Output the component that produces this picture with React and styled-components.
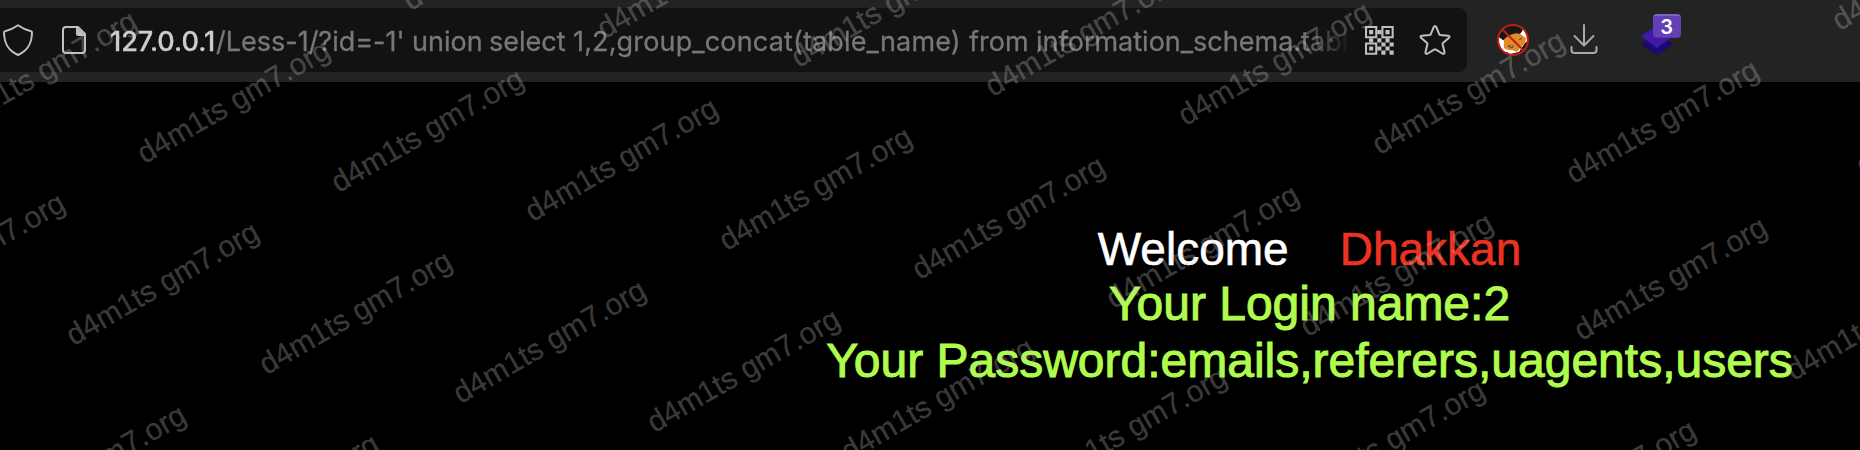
import React from "react";
import styled, { createGlobalStyle } from "styled-components";

const GlobalStyle = createGlobalStyle`
  html, body { margin: 0; background: #000; }
  body { overflow: hidden; }
  * { box-sizing: border-box; }
`;

const Window = styled.div`
  position: relative;
  width: 1860px;
  height: 450px;
  overflow: hidden;
  background: #000;
`;

const Toolbar = styled.header`
  display: flex;
  align-items: center;
  height: 82px;
  padding: 8px 0 10px;
  background: #232323;
`;

const AddressBar = styled.div`
  display: flex;
  align-items: center;
  width: 1467px;
  height: 64px;
  padding-left: 2px;
  border-radius: 0 8px 8px 0;
  background: #121212;
`;

const Icon = styled.svg`
  display: block;
  flex: none;
  width: ${(p) => p.$size || 32}px;
  height: ${(p) => p.$size || 32}px;
  margin-left: ${(p) => p.$gap || 0}px;
  overflow: visible;
`;

const Url = styled.div`
  display: flex;
  flex: none;
  width: 1241px;
  margin-left: 20px;
  padding-top: 3px;
  white-space: pre;
  font: 400 27px/40px Inter, sans-serif;
  color: #787878;
  -webkit-mask-image: linear-gradient(to right, #000 1192px, transparent 1241px);
  mask-image: linear-gradient(to right, #000 1192px, transparent 1241px);
`;

const UrlPart = styled.span`
  flex: none;
  width: ${(p) => p.$width}px;
  color: ${(p) => (p.$host ? "#cdcdcd" : "inherit")};
  font-weight: ${(p) => (p.$host ? 500 : 400)};
  letter-spacing: ${(p) => p.$spacing || 0}px;
  -webkit-text-stroke: 0.3px currentColor;
`;

const Extension = styled.div`
  position: relative;
  margin-left: 40.5px;
`;

const Badge = styled.span`
  position: absolute;
  top: -10px;
  left: 12px;
  width: 28px;
  height: 24px;
  border-radius: 4px;
  border-top: 2px solid #8263c4;
  border-bottom: 1px solid #5636a0;
  background: #643fb6;
  color: #fff;
  font: 600 20px/22px Inter, sans-serif;
  text-align: center;
`;

const Page = styled.main`
  display: flex;
  flex-direction: column;
  align-items: center;
  padding: 140px 0 0 759px;
  font-family: "Liberation Sans", Arial, sans-serif;
  white-space: pre;
`;

const Greeting = styled.div`
  display: flex;
  gap: 51px;
  margin-bottom: -1px;
  font-size: 46px;
  line-height: 54px;
  color: #fff;
  -webkit-text-stroke: 0.6px currentColor;
`;

const Name = styled.span`
  color: #ec3223;
`;

const Result = styled.div`
  font-size: 48px;
  line-height: 57px;
  color: #b0fc4e;
  -webkit-text-stroke: 1px currentColor;
`;

const Watermarks = styled.div`
  position: absolute;
  inset: 0;
  pointer-events: none;
`;

const Mark = styled.span`
  position: absolute;
  left: ${(p) => p.$x}px;
  top: ${(p) => p.$y}px;
  font: 30px/30px "Liberation Sans", Arial, sans-serif;
  white-space: pre;
  color: rgba(200, 200, 200, 0.28);
  -webkit-text-stroke: 0.3px rgba(200, 200, 200, 0.28);
  transform-origin: 0 27px;
  transform: translate(6.5px, -23px) rotate(-30deg);
`;

const MARKS = [
  [405, 9], [599, 37], [793, 66], [987, 95], [1180, 124], [1374, 153], [1568, 182], [1834, 29],
  [-54, 133], [139, 162], [333, 191], [527, 220], [721, 249], [914, 278], [1108, 307], [1302, 335],
  [-126, 315], [68, 344], [261, 373], [455, 402], [649, 431], [843, 460], [1036, 489],
  [-5, 527], [188, 556], [1294, 502], [1505, 542], [1576, 339], [1788, 379], [1858, 174],
];

const ShieldIcon = () => (
  <Icon viewBox="0 0 32 32" fill="none" stroke="#c0c0c0" strokeWidth="2" strokeLinejoin="round">
    <path d="M16 1.2 Q22.5 5.8 29 7.3 Q30.2 7.7 30 9 C29.6 19 26.5 26.5 16 31 C5.500 26.500 2.400 19 2 9 Q1.800 7.700 3 7.300 Q9.500 5.800 16 1.200Z" />
  </Icon>
);

const PageIcon = () => (
  <Icon $gap={24} viewBox="0 0 32 32">
    <path d="M8 3H20L27 10V26a3 3 0 0 1-3 3H8a3 3 0 0 1-3-3V6a3 3 0 0 1 3-3Z" fill="none" stroke="#c0c0c0" strokeWidth="2" />
    <path d="M18 2.500L28 12H20a2 2 0 0 1-2-2Z" fill="#c0c0c0" />
  </Icon>
);

const QrIcon = () => (
  <Icon $size={28.7} $gap={14} viewBox="0 0 14 14" fill="#c0c0c0">
    <path fillRule="evenodd" d="M0 0H6V6H0ZM1 1V5H5V1ZM8 0H14V6H8ZM9 1V5H13V1ZM0 8H6V14H0ZM1 9V13H5V9Z" />
    <path d="M2 2H4V4H2ZM10 2H12V4H10ZM2 10H4V12H2ZM6 2H8V4H6ZM2 6H4V8H2ZM6 6H8V8H6ZM10 6H12V8H10ZM8 8H10V10H8ZM12 8H14V10H12ZM6 10H8V12H6ZM10 10H12V12H10ZM8 12H10V14H8ZM12 12H14V14H12Z" />
  </Icon>
);

const StarIcon = () => (
  <Icon $gap={25.3} viewBox="0 0 32 32" fill="none" stroke="#c0c0c0" strokeWidth="2" strokeLinejoin="round">
    <path d="M14.700 3.100 Q16 .800 17.300 3.100 L20.300 10.300 Q20.600 11 21.400 11.100 L29 11.700 Q31.600 12.200 29.700 14.100 L24 19 Q23.400 19.500 23.600 20.300 L25.500 28 Q25.800 30.600 23.300 29.500 L16.900 25.600 Q16 25 15.100 25.600 L8.700 29.500 Q6.200 30.600 6.500 28 L8.400 20.300 Q8.600 19.500 8 19 L2.300 14.100 Q.400 12.200 3 11.700 L10.600 11.100 Q11.400 11 11.700 10.300Z" />
  </Icon>
);

const FoxIcon = () => (
  <Icon $gap={30} viewBox="0 0 32 32">
    <circle cx="16" cy="16" r="15" fill="#171717" />
    <path d="M1.500 14 L8 17 L11 28 L7 28 Q3 24 2 18ZM23 10 L27 5 Q31 10 30.500 17 L28 19 L22 28 L13 30 L7 26 L8 20Z" fill="#fff" />
    <path d="M6 17 Q9 12 16 10 Q21 8 25 11 L29 14 Q29 20 24 23 L20 28 Q17 26 13 26 Q9 26 7 24Z" fill="#e08a29" />
    <path d="M1.700 13 L7 17 L6.500 23 L3 21ZM26 5 L29 9 L29 14 L24 10Z" fill="#fff" />
    <path d="M11 22 L16 22 L15 24ZM22 16 L25 14" stroke="#543818" fill="#fff" strokeWidth="1" />
    <circle cx="16" cy="16" r="15" fill="none" stroke="#bd2017" strokeWidth="2" />
    <path d="M6 6L26 26" stroke="#bd2017" strokeWidth="2" />
  </Icon>
);

const DownloadIcon = () => (
  <Icon $gap={39} viewBox="0 0 32 32" fill="none" stroke="#a9a9a9" strokeWidth="2" strokeLinecap="round" strokeLinejoin="round">
    <path d="M16 1V21M6.500 12L16 21.500L25.500 12M3.500 23V26a3 3 0 0 0 3 3H25.500a3 3 0 0 0 3-3V23" />
  </Icon>
);

const LayersIcon = () => (
  <Icon viewBox="0 0 32 32">
    <path d="M0 20L16 8.500L32 20L16 31.500Z" fill="#1a0b70" />
    <path d="M0 12.500L16 1L32 12.500L16 24Z" fill="#4019a5" />
  </Icon>
);

export default function App() {
  return (
    <Window>
      <GlobalStyle />
      <Toolbar>
        <AddressBar>
          <ShieldIcon />
          <PageIcon />
          <Url>
            <UrlPart $host $width={106}>127.0.0.1</UrlPart>
            <UrlPart $width={196}>/Less-1/?id=-1'</UrlPart>
            <UrlPart $width={77}>union</UrlPart>
            <UrlPart $width={84}>select</UrlPart>
            <UrlPart $width={396} $spacing={0.15}>1,2,group_concat(table_name)</UrlPart>
            <UrlPart $width={67}>from</UrlPart>
            <UrlPart $width={315}>information_schema.tabl</UrlPart>
          </Url>
          <QrIcon />
          <StarIcon />
        </AddressBar>
        <FoxIcon />
        <DownloadIcon />
        <Extension>
          <LayersIcon />
          <Badge>3</Badge>
        </Extension>
      </Toolbar>
      <Page>
        <Greeting>
          <span>Welcome</span>
          <Name>Dhakkan</Name>
        </Greeting>
        <Result>Your Login name:2</Result>
        <Result>Your Password:emails,referers,uagents,users</Result>
      </Page>
      <Watermarks aria-hidden="true">
        {MARKS.map(([x, y]) => (
          <Mark key={`${x}:${y}`} $x={x} $y={y}>d4m1ts gm7.org</Mark>
        ))}
      </Watermarks>
    </Window>
  );
}
